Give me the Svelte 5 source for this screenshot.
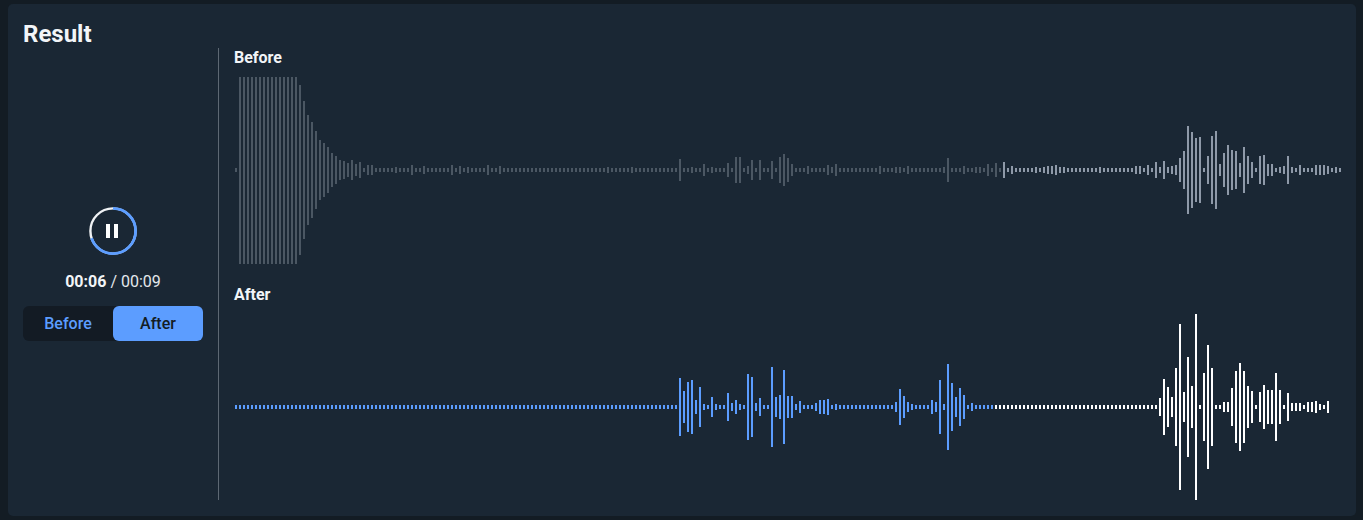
<script>
  const PROGRESS = 0.693;

  function build(count, overrides) {
    const bars = new Array(count).fill(2);
    for (const [i, h] of Object.entries(overrides)) bars[i] = h;
    return bars;
  }

  const beforeMap = {
    16: 85, 17: 69, 18: 55, 19: 48, 20: 39, 21: 30, 22: 27, 23: 23, 24: 17, 25: 14,
    26: 10, 27: 9, 28: 7, 29: 10, 30: 6, 31: 8, 33: 5, 34: 5,
    40: 3, 44: 5, 47: 4, 54: 5, 56: 4, 58: 3, 63: 5, 66: 4, 93: 3, 99: 3,
    111: 11, 114: 3, 117: 6, 119: 3, 123: 7, 125: 13, 126: 13, 128: 4, 129: 10, 131: 10,
    134: 9, 136: 13, 137: 16, 138: 12, 139: 6, 143: 4, 148: 5, 149: 3, 150: 6, 161: 4,
    165: 3, 166: 3, 168: 4, 177: 3, 178: 12, 182: 4, 185: 3, 186: 3, 188: 6, 190: 7,
    192: 8, 194: 4, 200: 3, 202: 3, 203: 4, 204: 4, 205: 5, 206: 3, 207: 3, 216: 3,
    225: 4, 226: 4, 228: 5, 230: 8, 231: 3, 232: 9, 233: 3, 234: 4, 235: 5, 236: 12,
    237: 19, 238: 44, 239: 38, 240: 32, 241: 33, 243: 14, 244: 34, 245: 39, 246: 6,
    247: 17, 248: 25, 249: 20, 250: 19, 251: 7, 252: 23, 253: 14, 254: 8, 256: 14,
    257: 15, 258: 6, 259: 6, 261: 3, 262: 4, 263: 14, 264: 3, 266: 5,
    270: 5, 271: 5, 272: 5, 273: 4, 275: 3
  };
  for (let i = 1; i <= 15; i++) beforeMap[i] = 93.5;

  const afterMap = {
    111: 29, 112: 16, 113: 25, 114: 27, 115: 7, 116: 20, 117: 3, 119: 10, 120: 3,
    123: 14, 124: 4, 125: 7, 126: 3, 128: 33, 129: 30, 130: 4, 131: 9, 134: 40, 135: 10,
    136: 12, 137: 37, 138: 11, 139: 11, 140: 3, 141: 6, 145: 4, 146: 7, 147: 7, 148: 8,
    150: 3, 165: 5, 166: 18, 167: 11, 168: 5, 169: 3, 174: 7, 175: 5, 176: 27, 177: 3,
    178: 43, 179: 24, 180: 10, 181: 19, 182: 12, 184: 4,
    231: 9, 232: 28, 233: 20, 234: 10, 235: 39, 236: 83, 237: 15, 238: 50, 239: 21,
    240: 93, 242: 34, 243: 62, 244: 39, 247: 5, 248: 5, 249: 19, 250: 36, 251: 44,
    252: 36, 253: 21, 254: 16, 256: 15, 257: 22, 258: 17, 259: 17, 260: 34, 261: 17,
    263: 14, 264: 4, 265: 4, 266: 4, 268: 5, 269: 5, 270: 6, 271: 3, 273: 6
  };

  const tracks = [
    { label: 'Before', kind: 'before', bars: build(277, beforeMap) },
    { label: 'After', kind: 'after', bars: build(274, afterMap) }
  ];

  const C = 2 * Math.PI * 22.6;
</script>

<div class="page">
  <section class="card">
    <h2 class="title">Result</h2>
    <div class="body">
      <aside class="controls">
        <button class="play" aria-label="Pause">
          <svg width="48" height="48" viewBox="0 0 48 48">
            <circle class="ring-rest" cx="24" cy="24" r="22.6" />
            <circle
              class="ring-progress"
              cx="24"
              cy="24"
              r="22.6"
              stroke-dasharray="{C * PROGRESS} {C}"
              transform="rotate(-90 24 24)"
            />
            <rect class="pause" x="17" y="17" width="4" height="14" />
            <rect class="pause" x="25" y="17" width="4" height="14" />
          </svg>
        </button>
        <div class="time"><strong>00:06</strong> / 00:09</div>
        <div class="toggle">
          <button class="opt">Before</button>
          <button class="opt active">After</button>
        </div>
      </aside>
      <div class="tracks">
        {#each tracks as track}
          <div class="track">
            <div class="label">{track.label}</div>
            <div class="wave">
              {#each track.bars as h, i}
                <span
                  class="bar {track.kind}"
                  class:played={i / track.bars.length < PROGRESS}
                  style="height:{h * 2}px"
                ></span>
              {/each}
            </div>
          </div>
        {/each}
      </div>
    </div>
  </section>
</div>

<style>
  :global(body) {
    margin: 0;
    background: #131c24;
  }
  .page {
    box-sizing: border-box;
    height: 520px;
    padding: 4px 7px 4px 8px;
    overflow: hidden;
    font-family: Roboto, "Liberation Sans", sans-serif;
    color: #f2f5f8;
  }
  .card {
    box-sizing: border-box;
    height: 512px;
    background: #1a2734;
    border-radius: 5px;
    padding: 16px 15px 16px;
    display: flex;
    flex-direction: column;
  }
  .title {
    margin: 0;
    font-size: 24px;
    line-height: 28px;
    font-weight: 700;
    height: 28px;
  }
  .body {
    flex: 1;
    min-height: 0;
    display: flex;
  }
  .controls {
    box-sizing: content-box;
    width: 180px;
    padding-right: 15px;
    border-right: 1px solid #5d6873;
    display: flex;
    flex-direction: column;
    align-items: center;
    justify-content: center;
  }
  .play {
    width: 48px;
    height: 48px;
    padding: 0;
    border: 0;
    background: none;
    display: block;
  }
  .play svg {
    display: block;
  }
  .ring-rest,
  .ring-progress {
    fill: none;
  }
  .ring-rest {
    stroke: #f0f2f4;
    stroke-width: 2.4;
  }
  .ring-progress {
    stroke: #5c9dff;
    stroke-width: 2.8;
  }
  .pause {
    fill: #ffffff;
  }
  .time {
    margin-top: 17px;
    font-size: 16px;
    line-height: 20px;
    color: #e4e8ec;
  }
  .time strong {
    font-weight: 700;
    color: #f2f5f8;
  }
  .toggle {
    margin-top: 14px;
    width: 180px;
    height: 35px;
    display: flex;
    background: #131b24;
    border-radius: 6px;
  }
  .opt {
    flex: 1;
    border: 0;
    padding: 0;
    background: transparent;
    border-radius: 6px;
    font-family: inherit;
    font-size: 16px;
    font-weight: 500;
    color: #5c9dff;
  }
  .opt.active {
    background: #5c9dff;
    color: #131c24;
  }
  .tracks {
    flex: 1;
    min-width: 0;
    padding-left: 15px;
    display: flex;
    flex-direction: column;
    gap: 22px;
  }
  .label {
    font-size: 16px;
    line-height: 19px;
    font-weight: 700;
    margin-bottom: 10px;
  }
  .wave {
    height: 186px;
    padding-left: 1px;
    display: flex;
    align-items: center;
    gap: 2px;
  }
  .bar {
    flex: none;
    width: 2px;
  }
  .bar.before {
    background: #8e99a8;
  }
  .bar.before.played {
    background: #4b5763;
  }
  .bar.after {
    background: #ffffff;
  }
  .bar.after.played {
    background: #5c9dff;
  }
</style>
